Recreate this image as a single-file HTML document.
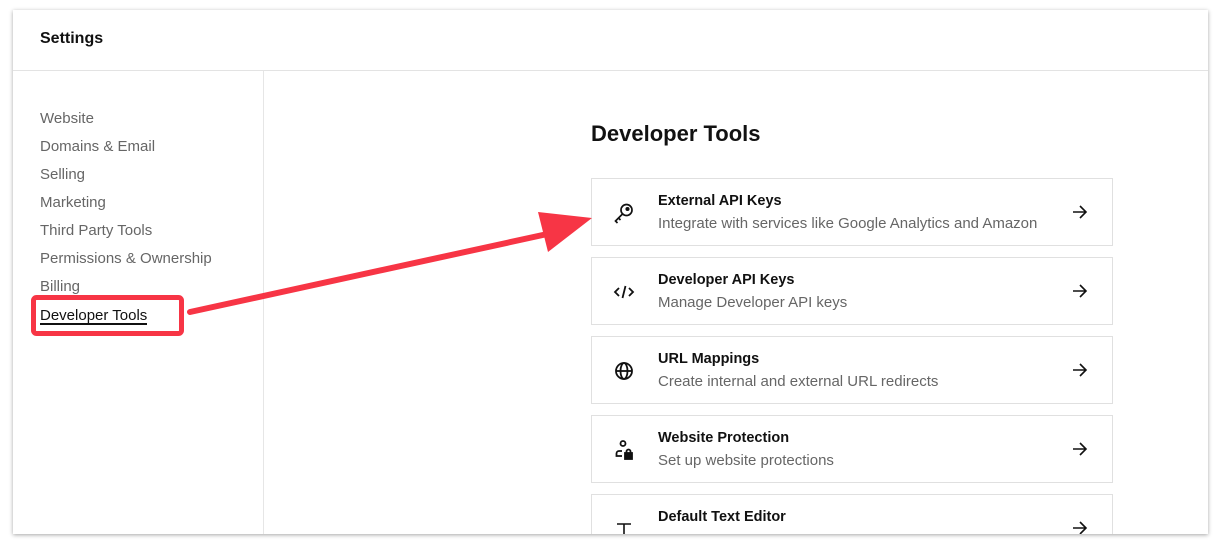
<!DOCTYPE html>
<html><head><style>
body{margin:0;width:1222px;height:548px;background:#fff;font-family:"Liberation Sans",sans-serif;position:relative;overflow:hidden}
.win{position:absolute;left:13px;top:10px;width:1195px;height:524px;background:#fff;box-shadow:0 1px 4px rgba(0,0,0,.35);overflow:hidden}
.hdr{position:absolute;left:0;top:0;right:0;height:60px;border-bottom:1px solid #e3e3e3}
.hdr span{position:absolute;left:27px;top:20px;font-size:16px;font-weight:bold;color:#111}
.side{position:absolute;left:250px;top:61px;bottom:0;border-left:1px solid #e6e6e6}
.nav{position:absolute;left:27px;font-size:15px;color:#666}
h1{position:absolute;left:578px;top:111px;margin:0;font-size:22px;font-weight:bold;color:#111}
.card{position:absolute;left:578px;width:520px;height:66px;border:1px solid #e0e0e0;background:#fff}
.card .t{position:absolute;left:66px;top:14px;font-size:14.5px;font-weight:bold;color:#111}
.card .d{position:absolute;left:66px;top:36px;font-size:15px;color:#666}
.card svg.ic{position:absolute;left:20px;top:22px}
.card .ar{position:absolute right:24px;top:25px}
.card .ar{position:absolute;right:24px;top:25px}
</style></head><body>
<div class="win">
<div class="hdr"><span>Settings</span></div>
<div class="side"></div>
<div class="nav" style="top:100px">Website</div>
<div class="nav" style="top:128px">Domains &amp; Email</div>
<div class="nav" style="top:156px">Selling</div>
<div class="nav" style="top:184px">Marketing</div>
<div class="nav" style="top:212px">Third Party Tools</div>
<div class="nav" style="top:240px">Permissions &amp; Ownership</div>
<div class="nav" style="top:268px">Billing</div>
<h1>Developer Tools</h1>
<div class="card" style="top:168px"><svg class="ic" width="24" height="24" viewBox="0 0 24 24" fill="none" stroke="#111" stroke-width="1.7"><circle cx="14.5" cy="9" r="5.5"/><circle cx="15.5" cy="8" r="1.2" fill="#111"/><path d="M10.5 13L3.5 20l2 2M6.5 17l2 2"/></svg><div class="t">External API Keys</div><div class="d">Integrate with services like Google Analytics and Amazon</div><svg class="ar" width="16" height="16" viewBox="0 0 16 16" fill="none" stroke="#111" stroke-width="1.6"><path d="M1 8h13M8 2l6 6-6 6"/></svg></div>
<div class="card" style="top:247px"><svg class="ic" width="24" height="24" viewBox="0 0 24 24" fill="none" stroke="#111" stroke-width="1.8"><path d="M7 8l-4 4 4 4M17 8l4 4-4 4M13.5 6l-3 12"/></svg><div class="t">Developer API Keys</div><div class="d">Manage Developer API keys</div><svg class="ar" width="16" height="16" viewBox="0 0 16 16" fill="none" stroke="#111" stroke-width="1.6"><path d="M1 8h13M8 2l6 6-6 6"/></svg></div>
<div class="card" style="top:326px"><svg class="ic" width="24" height="24" viewBox="0 0 24 24" fill="none" stroke="#111" stroke-width="1.8"><circle cx="12" cy="12" r="8"/><ellipse cx="12" cy="12" rx="3.5" ry="8"/><path d="M4 12h16"/></svg><div class="t">URL Mappings</div><div class="d">Create internal and external URL redirects</div><svg class="ar" width="16" height="16" viewBox="0 0 16 16" fill="none" stroke="#111" stroke-width="1.6"><path d="M1 8h13M8 2l6 6-6 6"/></svg></div>
<div class="card" style="top:405px"><svg class="ic" width="24" height="24" viewBox="0 0 24 24" fill="none" stroke="#111" stroke-width="1.8"><circle cx="11" cy="5.5" r="2.5"/><path d="M10 13H7a2.5 2.5 0 0 0-2.5 2.5V18H10"/><rect x="13" y="15" width="7" height="6" fill="#111"/><path d="M14.5 15v-1.5a2 2 0 0 1 4 0V15"/></svg><div class="t">Website Protection</div><div class="d">Set up website protections</div><svg class="ar" width="16" height="16" viewBox="0 0 16 16" fill="none" stroke="#111" stroke-width="1.6"><path d="M1 8h13M8 2l6 6-6 6"/></svg></div>
<div class="card" style="top:484px"><svg class="ic" width="24" height="24" viewBox="0 0 24 24" fill="none" stroke="#111" stroke-width="1.6" style="top:24px"><path d="M5 5h14M12 5v18"/></svg><div class="t">Default Text Editor</div><svg class="ar" width="16" height="16" viewBox="0 0 16 16" fill="none" stroke="#111" stroke-width="1.6"><path d="M1 8h13M8 2l6 6-6 6"/></svg></div>
</div>
<svg width="1222" height="548" style="position:absolute;left:0;top:0">
<rect x="33.5" y="297.5" width="148" height="36" rx="3" fill="#fff" stroke="#f73545" stroke-width="5"/>
<text x="40" y="320" font-family="Liberation Sans" font-size="15" fill="#111">Developer Tools</text>
<rect x="40" y="323" width="107" height="2" fill="#111"/>
<path d="M190 312L552 233" stroke="#f73545" stroke-width="6" stroke-linecap="round"/>
<path d="M592 218L538 212L548 252Z" fill="#f73545"/>
</svg>
</body></html>
